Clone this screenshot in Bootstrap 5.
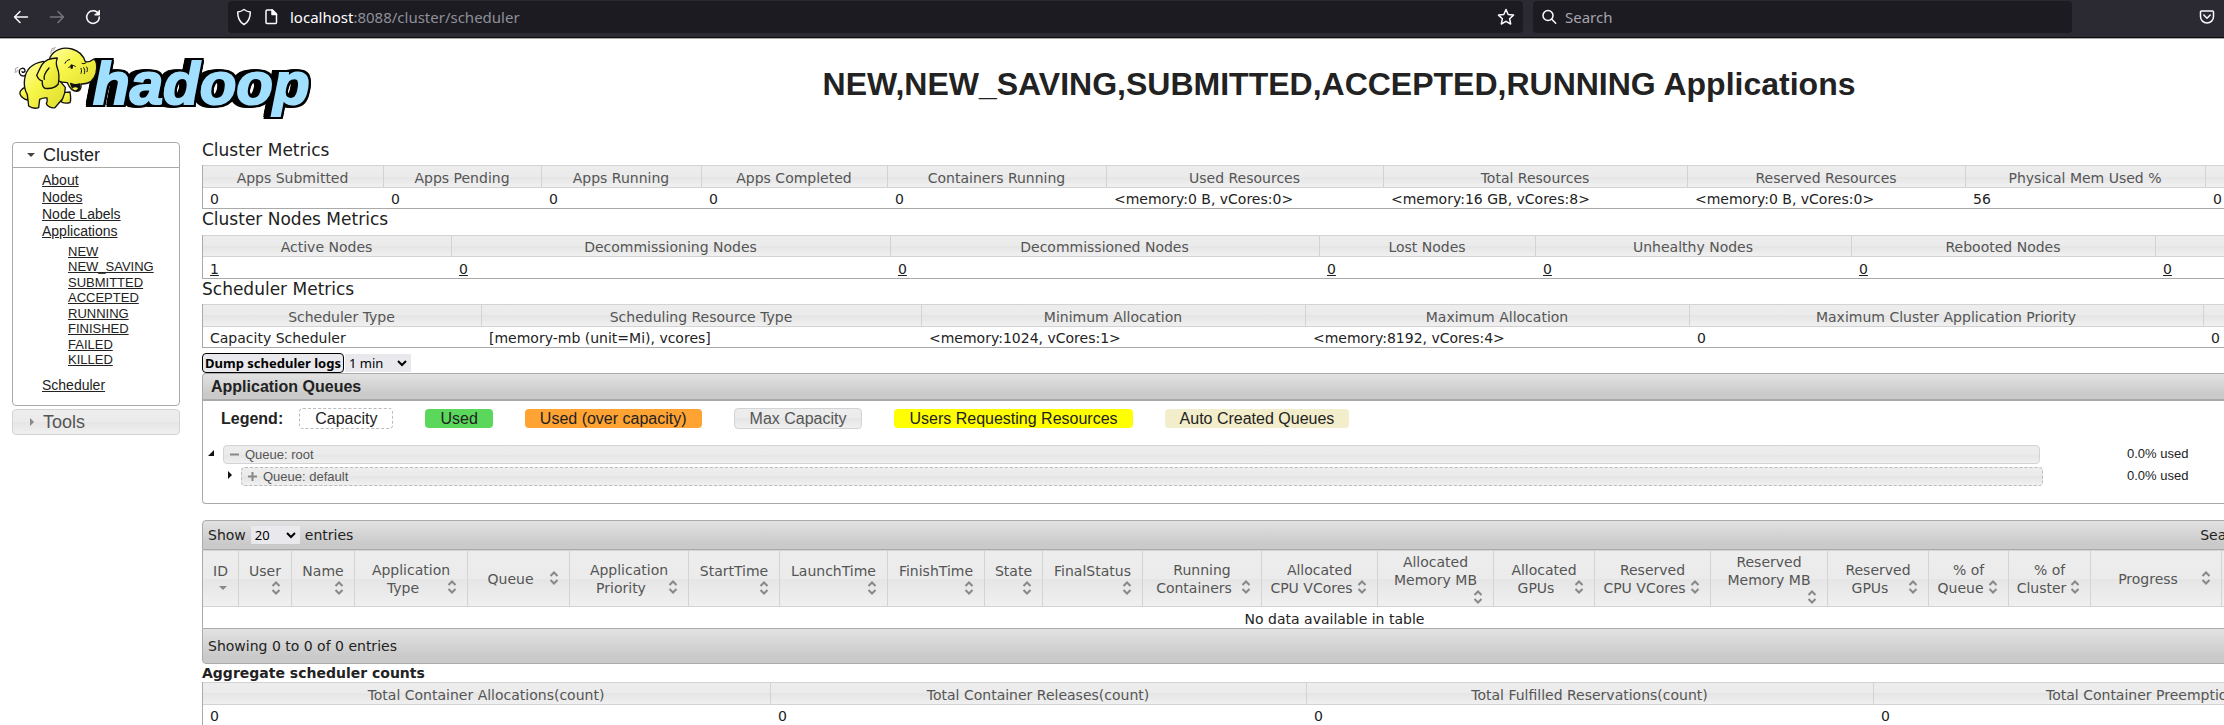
<!DOCTYPE html>
<html lang="en">
<head>
<meta charset="utf-8">
<meta name="viewport" content="width=device-width, initial-scale=1">
<title>NEW,NEW_SAVING,SUBMITTED,ACCEPTED,RUNNING Applications</title>
<link href="https://cdn.jsdelivr.net/npm/bootstrap@5.3.0/dist/css/bootstrap.min.css" rel="stylesheet">
<style>
:root{--sans:"Liberation Sans",Arial,sans-serif;--wide:"DejaVu Sans",sans-serif;--chrome:"Noto Sans",sans-serif;--glass:linear-gradient(#ededed 0,#ebebeb 50%,#e5e5e5 50%,#f0f0f0 100%)}
body{font:14px/18px var(--wide);color:#222;overflow-x:hidden;background:#fff}
a{color:#222;text-decoration:underline}
/* browser toolbar */
.chrome-bar{height:39px;background:#2b2a33;border-bottom:1px solid #aaa;box-shadow:inset 0 -1px #0c0c0d;font:15px/20px var(--chrome);padding:1px 0 5px}
.nav-btns{width:228px;padding-left:12px;gap:18px}
.nav-btns button{width:18px;height:18px;padding:0;border:0;background:none;line-height:0}
.field{background:#1c1b22;border-radius:4px;color:#8f8f98}
.field-url{flex:1295 1 0;gap:12px}
.field-search{flex:539 1 0;margin-left:10px}
.field-search input{background:none;border:0;outline:0;padding:0;color:#fbfbfe;min-width:0}
.field-search input::placeholder{color:#a5a4ac;opacity:1}
.bar-end{width:152px;padding-right:9px}
/* page */
.page{width:calc(100% + 252px);overflow:hidden}
.masthead{display:grid;grid-template-columns:202px 1fr;height:100px}
.masthead h1{font:bold 32px/40px var(--sans);margin:25px 0 0}
.masthead svg{overflow:visible}
.wordmark{font:italic bold 60px var(--sans);fill:#a0dfff;stroke:#a0dfff;stroke-width:2px;filter:drop-shadow(2px 0 0 #000) drop-shadow(-3px 0 0 #000) drop-shadow(-4px 0 0 #000) drop-shadow(0 2px 0 #000) drop-shadow(0 -2px 0 #000)}
.side{width:168px;margin:3px 22px 0 12px;font:14px/17px var(--sans)}
.side h3{font:18px/24px var(--sans);margin:0;padding-left:14px;gap:8px}
.side h3 svg{flex:none}
.side-box{border:1px solid #aaa;border-radius:4px}
.side-box h3{border-bottom:1px solid #aaa}
.side-box ul{list-style:none;margin:0;padding:4px 0 11px 29px}
.side-box ul ul{padding:4px 0 9px 26px;font-size:13px;line-height:1.19}
.side-tools{border:1px solid #d3d3d3;border-radius:4px;background:var(--glass);color:#555;margin-top:3px!important}
main{min-width:0;margin-right:8px}
h2{font:17px/22px var(--wide);margin:0;padding-bottom:4px}
table + h2{line-height:20px;padding-bottom:6px}
.nodes + h2{padding-bottom:5px}
.grid-table{width:100%;table-layout:fixed;border-collapse:separate;border-spacing:0;border:solid #aaa;border-width:0 1px 1px}
.grid-table th{font-weight:400;text-align:center;color:#555;background:var(--glass);border:solid #d3d3d3;border-width:1px 1px 1px 0;padding:3px 8px 0 7px;white-space:nowrap}
.grid-table td{padding:2px 8px 0 7px}
.nodes th{padding-top:2px}
.nodes td{padding-top:3px}
.grid-table th:last-child{border-right:0}
.cluster col:nth-child(1){width:181px}.cluster col:nth-child(2){width:158px}.cluster col:nth-child(3){width:160px}.cluster col:nth-child(4){width:186px}.cluster col:nth-child(5){width:219px}.cluster col:nth-child(6){width:277px}.cluster col:nth-child(7){width:304px}.cluster col:nth-child(8){width:278px}.cluster col:nth-child(9){width:240px}.cluster col:nth-child(10){width:261px}
.nodes col:nth-child(1){width:249px}.nodes col:nth-child(2){width:439px}.nodes col:nth-child(3){width:429px}.nodes col:nth-child(4){width:216px}.nodes col:nth-child(5){width:316px}.nodes col:nth-child(6){width:304px}.nodes col:nth-child(7){width:311px}
.sched col:nth-child(1){width:279px}.sched col:nth-child(2){width:440px}.sched col:nth-child(3){width:384px}.sched col:nth-child(4){width:384px}.sched col:nth-child(5){width:514px}.sched col:nth-child(6){width:263px}
.agg col:nth-child(1){width:568px}.agg col:nth-child(2){width:536px}.agg col:nth-child(3){width:567px}.agg col:nth-child(4){width:593px}
.dump-row{padding-top:5px}
.dump{font:bold 13px/16px var(--chrome);height:20px;padding:0 2px;border:1px solid #000;border-radius:4px;background:#e9e9ed;width:142px;white-space:nowrap;color:#000}
.pick{appearance:none;border:0;border-radius:0;height:18px;padding:0 4px;color:#000;font:13px/18px var(--chrome);background:#e9e9ed url("data:image/svg+xml,%3Csvg xmlns='http://www.w3.org/2000/svg' width='10' height='10'%3E%3Cpath d='M1 3l4 4 4-4' fill='none' stroke='%23000' stroke-width='2'/%3E%3C/svg%3E") no-repeat right 4px center}
.pick-min{width:66px;margin-left:1px}.pick-len{width:49px}
.dark-bar{background:linear-gradient(#e2e2e2,#cacaca 80%);border:1px solid #aaa}
.queue-title{font:bold 16px/25px var(--sans);padding-left:8px;border-bottom-width:2px;border-radius:4px 4px 0 0}
.queue-box{border:1px solid #aaa;border-top:0;border-radius:0 0 4px 4px;height:103px;padding:7px 0 0;font:16px/19px var(--sans)}
.legend-row{padding-left:18px;gap:32px}
.legend-row strong{margin-right:-16px}
.key{padding:0 15px;border-radius:4px;line-height:19px}
.key-cap{border:1px dashed #bbb}
.key-max{border:1px solid #d3d3d3;background:var(--glass);color:#555}
.key-used{background:#5bd75b}.key-over{background:#ffa333}.key-req{background:#ff0}.key-auto{background:#f2eecb}
.q-row{height:22px;font-size:13px;line-height:17px}
.q-tree{padding-top:16px}
.q-tri{width:16px;margin-left:4px}
.q-bar{border:1px solid #d3d3d3;border-radius:4px;background:var(--glass);color:#555;gap:6px;height:19px;margin-right:87px;padding-left:6px}
.q-child{padding-left:18px}
.q-child .q-bar{border:1px dashed #bbb;margin-right:84px}
.q-used{width:340px}
.tool-row{height:30px;padding:0 5px;border-radius:4px 4px 0 0;gap:5px;margin-top:16px}
.search-box{width:204px;height:20px;border:1px solid #888}
.foot-row{height:36px;padding-left:5px;border-radius:0 0 4px 4px}
.apps{border-bottom:0}
.apps th{height:57px;padding:1px 7px;vertical-align:middle}
.apps td{text-align:center;height:21px}
.apps col:nth-child(1){width:36px}.apps col:nth-child(2){width:53px}.apps col:nth-child(3){width:63px}.apps col:nth-child(4){width:113px}.apps col:nth-child(5){width:102px}.apps col:nth-child(6){width:119px}.apps col:nth-child(7){width:91px}.apps col:nth-child(8){width:108px}.apps col:nth-child(9){width:97px}.apps col:nth-child(10){width:58px}.apps col:nth-child(11){width:100px}.apps col:nth-child(12){width:119px}.apps col:nth-child(13){width:116px}.apps col:nth-child(14){width:116px}.apps col:nth-child(15){width:101px}.apps col:nth-child(16){width:116px}.apps col:nth-child(17){width:117px}.apps col:nth-child(18){width:101px}.apps col:nth-child(19){width:80px}.apps col:nth-child(20){width:82px}.apps col:nth-child(21){width:131px}.apps col:nth-child(22){width:108px}.apps col:nth-child(23){width:137px}
.sort{float:right;width:16px;height:16px}
</style>
</head>
<body>
<svg class="d-none">
  <symbol id="both" viewBox="0 0 16 16"><path d="M4.500 6L8 2.500 11.500 6M4.500 10L8 13.500l3.500-3.500" fill="none" stroke="#888" stroke-width="2"/></symbol>
  <symbol id="down" viewBox="0 0 16 16"><path d="M4 6h8l-4 4z" fill="#888"/></symbol>
</svg>

<div class="chrome-bar d-flex">
  <div class="nav-btns d-flex align-items-center">
    <button aria-label="Back"><svg width="18" height="18" fill="none" stroke="#fbfbfe" stroke-width="1.500" stroke-linecap="round" stroke-linejoin="round"><path d="M15.500 9h-13M8 3.500L2.500 9l5.500 5.500"/></svg></button>
    <button aria-label="Forward"><svg width="18" height="18" fill="none" stroke="#77767e" stroke-width="1.500" stroke-linecap="round" stroke-linejoin="round"><path d="M2.500 9h13M10 3.500L15.500 9 10 14.500"/></svg></button>
    <button aria-label="Reload"><svg width="18" height="18" fill="none" stroke="#fbfbfe" stroke-width="1.500" stroke-linecap="round"><path d="M14.500 6A6.300 6.300 0 1 0 15.300 9"/><path d="M15.500 2.500v4.500h-4.500z" fill="#fbfbfe" stroke-width="1"/></svg></button>
  </div>
  <div class="field field-url d-flex align-items-center" role="textbox" aria-label="Address">
    <svg width="16" height="18" class="ms-2" fill="none" stroke="#fbfbfe" stroke-width="1.500" stroke-linejoin="round"><path d="M8 1.500C10 3 12 3.800 14.300 4c0 6-1.500 10-6.300 12.500C3.200 14 1.700 10 1.700 4 4 3.800 6 3 8 1.500z"/></svg>
    <svg width="14" height="18" fill="none" stroke="#fbfbfe" stroke-width="1.500" stroke-linejoin="round"><path d="M3 2h5.500l4 4v8.500a1 1 0 0 1-1 1H3a1 1 0 0 1-1-1V3a1 1 0 0 1 1-1z"/><path d="M8 2v4.500h4.500z" fill="#fbfbfe"/></svg>
    <span><span class="text-white">localhost</span>:8088/cluster/scheduler</span>
    <svg width="18" height="18" class="ms-auto me-2" fill="none" stroke="#fbfbfe" stroke-width="1.500" stroke-linejoin="round"><path d="M9 1.500l2.200 5 5.300.6-3.900 3.600 1.100 5.300L9 13.300 4.300 16l1.100-5.300L1.500 7.100l5.300-.6z"/></svg>
  </div>
  <label class="field field-search d-flex align-items-center">
    <svg width="16" height="18" class="ms-2 me-2" fill="none" stroke="#fbfbfe" stroke-width="1.500" stroke-linecap="round"><circle cx="7" cy="7.500" r="5"/><path d="M10.700 11.200l4 4"/></svg>
    <input type="text" class="flex-grow-1" placeholder="Search" aria-label="Search">
  </label>
  <div class="bar-end d-flex align-items-center justify-content-end">
    <svg width="16" height="18" fill="none" stroke="#fbfbfe" stroke-width="1.500" stroke-linecap="round" stroke-linejoin="round"><path d="M2.500 3h11a1 1 0 0 1 1 1v4.500a6.500 6.500 0 0 1-13 0V4a1 1 0 0 1 1-1z"/><path d="M4.800 7L8 10.200 11.200 7"/></svg>
  </div>
</div>

<div class="page">
  <header class="masthead">
    <svg width="202" height="90" role="img" aria-label="hadoop">
      <defs><linearGradient id="skin" x1="0" y1="0" x2="1" y2="1"><stop offset="0" stop-color="#ffffb0"/><stop offset=".4" stop-color="#f7f64a"/><stop offset="1" stop-color="#dedd2c"/></linearGradient></defs>
      <text class="wordmark" x="93" y="65">hadoop</text>
      <g transform="scale(.33333) translate(0 -117)" stroke="#111" stroke-width="4" stroke-linejoin="round" stroke-linecap="round" fill="url(#skin)">
        <path d="M76 226C64 232 56 222 58 212c2-8 14-10 17-2 1 6-5 9-9 5" fill="none"/>
        <path d="M190 278l-6 28c8 4 18 4 26 2 4-8 2-20 0-32z"/>
        <path d="M74 262c-10 6-16 12-14 20 4 10 14 16 22 18l8-20z"/>
        <path d="M130 184C96 190 78 208 74 236c-3 18 0 34 8 48l4 34c8 6 20 8 30 5l3-25c8-4 16-5 22-4 2 9 0 12-2 17 4 10 16 14 26 12 8-10 16-20 23-27 6-12 8-22 8-34z"/>
        <path d="M150 172c12-24 40-32 66-25 22 6 34 20 40 38 10 2 18-2 26-8 8 6 10 22 6 42-6 24-22 34-45 33 2 14-4 22-13 22-14 0-22-12-28-26-20 0-46-10-58-26z"/>
        <path d="M212 250c8 4 18 5 27 2 2 11-1 19-8 20-10 0-16-10-19-22z" fill="#111"/>
        <path d="M217 265c5-4 12-4 17-1-3 8-10 9-17 1z" fill="#f7f64a" stroke="none"/>
        <path d="M172 174c-20 0-38 8-46 20-7 12-11 22-16 32 4 10 8 16 17 17-1 10 1 18 8 22 16 2 32-3 40-13 3-18 2-36-3-48-4-10-4-20 0-30z"/>
        <path d="M133 238c-3-10 2-20 14-34" fill="none"/>
        <path d="M195 190c3-7 8-11 14-11M206 203c6-8 14-8 20-4" fill="none" stroke-width="3"/>
        <ellipse cx="215" cy="200" rx="4" ry="7" fill="#111" stroke="none"/>
        <path d="M246 190c4 2 8 2 12-2M243 205c2 6 2 10 0 15M251 203c4 6 4 12 2 18M260 201c3 5 3 9 1 14" fill="none" stroke-width="3"/>
        <path d="M152 160l4-14 10-3M158 152l6-5M45 218l2-13 7-3M50 216l2-6" fill="none" stroke="#777" stroke-width="2"/>
      </g>
    </svg>
    <h1 class="text-center">NEW,NEW_SAVING,SUBMITTED,ACCEPTED,RUNNING Applications</h1>
  </header>

  <div class="d-flex align-items-start">
    <nav class="side flex-shrink-0">
      <div class="side-box">
        <h3 class="d-flex align-items-center"><svg width="8" height="6"><path d="M0 1h8L4 5z" fill="#444"/></svg>Cluster</h3>
        <ul>
          <li><a href="#">About</a></li>
          <li><a href="#">Nodes</a></li>
          <li><a href="#">Node Labels</a></li>
          <li><a href="#">Applications</a>
            <ul>
              <li><a href="#">NEW</a></li>
              <li><a href="#">NEW_SAVING</a></li>
              <li><a href="#">SUBMITTED</a></li>
              <li><a href="#">ACCEPTED</a></li>
              <li><a href="#">RUNNING</a></li>
              <li><a href="#">FINISHED</a></li>
              <li><a href="#">FAILED</a></li>
              <li><a href="#">KILLED</a></li>
            </ul>
          </li>
          <li><a href="#">Scheduler</a></li>
        </ul>
      </div>
      <h3 class="side-tools d-flex align-items-center"><svg width="8" height="8"><path d="M3 0v8l4-4z" fill="#888"/></svg>Tools</h3>
    </nav>

    <main class="flex-grow-1">
      <h2>Cluster Metrics</h2>
      <table class="grid-table cluster">
        <colgroup><col><col><col><col><col><col><col><col><col><col></colgroup>
        <thead><tr><th>Apps Submitted</th><th>Apps Pending</th><th>Apps Running</th><th>Apps Completed</th><th>Containers Running</th><th>Used Resources</th><th>Total Resources</th><th>Reserved Resources</th><th>Physical Mem Used %</th><th>Physical VCores Used %</th></tr></thead>
        <tbody><tr><td>0</td><td>0</td><td>0</td><td>0</td><td>0</td><td>&lt;memory:0 B, vCores:0&gt;</td><td>&lt;memory:16 GB, vCores:8&gt;</td><td>&lt;memory:0 B, vCores:0&gt;</td><td>56</td><td>0</td></tr></tbody>
      </table>
      <h2>Cluster Nodes Metrics</h2>
      <table class="grid-table nodes">
        <colgroup><col><col><col><col><col><col><col></colgroup>
        <thead><tr><th>Active Nodes</th><th>Decommissioning Nodes</th><th>Decommissioned Nodes</th><th>Lost Nodes</th><th>Unhealthy Nodes</th><th>Rebooted Nodes</th><th>Shutdown Nodes</th></tr></thead>
        <tbody><tr><td><a href="#">1</a></td><td><a href="#">0</a></td><td><a href="#">0</a></td><td><a href="#">0</a></td><td><a href="#">0</a></td><td><a href="#">0</a></td><td><a href="#">0</a></td></tr></tbody>
      </table>
      <h2>Scheduler Metrics</h2>
      <table class="grid-table sched">
        <colgroup><col><col><col><col><col><col></colgroup>
        <thead><tr><th>Scheduler Type</th><th>Scheduling Resource Type</th><th>Minimum Allocation</th><th>Maximum Allocation</th><th>Maximum Cluster Application Priority</th><th>Scheduler Busy %</th></tr></thead>
        <tbody><tr><td>Capacity Scheduler</td><td>[memory-mb (unit=Mi), vcores]</td><td>&lt;memory:1024, vCores:1&gt;</td><td>&lt;memory:8192, vCores:4&gt;</td><td>0</td><td>0</td></tr></tbody>
      </table>

      <div class="dump-row d-flex align-items-center">
        <button class="dump" type="button">Dump scheduler logs</button>
        <select class="pick pick-min" aria-label="Log period"><option>1 min</option><option>5 min</option><option>10 min</option></select>
      </div>
      <div class="dark-bar queue-title">Application Queues</div>
      <div class="queue-box">
        <div class="legend-row d-flex align-items-center">
          <strong>Legend:</strong>
          <span class="key key-cap">Capacity</span>
          <span class="key key-used">Used</span>
          <span class="key key-over">Used (over capacity)</span>
          <span class="key key-max">Max Capacity</span>
          <span class="key key-req">Users Requesting Resources</span>
          <span class="key key-auto">Auto Created Queues</span>
        </div>
        <div class="q-tree">
          <div class="q-row d-flex align-items-start">
            <svg class="q-tri" height="16"><path d="M7 5v6H1z" fill="#111"/></svg>
            <div class="q-bar d-flex align-items-center flex-grow-1"><svg width="9" height="9"><path d="M0 4.500h9" stroke="#888" stroke-width="2"/></svg>Queue: root</div>
            <span class="q-used">0.0% used</span>
          </div>
          <div class="q-row q-child d-flex align-items-start">
            <svg class="q-tri" height="16"><path d="M3 4v8l4-4z" fill="#111"/></svg>
            <div class="q-bar d-flex align-items-center flex-grow-1"><svg width="9" height="9"><path d="M0 4.500h9M4.500 0v9" stroke="#888" stroke-width="2"/></svg>Queue: default</div>
            <span class="q-used">0.0% used</span>
          </div>
        </div>
      </div>

      <div class="dark-bar tool-row d-flex align-items-center">
        <label for="len">Show</label>
        <select id="len" class="pick pick-len"><option>20</option><option>50</option><option>100</option></select>
        <span>entries</span>
        <label for="find" class="ms-auto">Search:</label>
        <input id="find" class="search-box" type="text">
      </div>
      <table class="grid-table apps">
        <colgroup><col><col><col><col><col><col><col><col><col><col><col><col><col><col><col><col><col><col><col><col><col><col><col></colgroup>
        <thead><tr>
          <th>ID<br><svg class="sort"><use href="#down"/></svg></th>
          <th>User<br><svg class="sort"><use href="#both"/></svg></th>
          <th>Name<br><svg class="sort"><use href="#both"/></svg></th>
          <th>Application<br>Type<svg class="sort"><use href="#both"/></svg></th>
          <th>Queue<svg class="sort"><use href="#both"/></svg></th>
          <th>Application<br>Priority<svg class="sort"><use href="#both"/></svg></th>
          <th>StartTime<br><svg class="sort"><use href="#both"/></svg></th>
          <th>LaunchTime<br><svg class="sort"><use href="#both"/></svg></th>
          <th>FinishTime<br><svg class="sort"><use href="#both"/></svg></th>
          <th>State<br><svg class="sort"><use href="#both"/></svg></th>
          <th>FinalStatus<br><svg class="sort"><use href="#both"/></svg></th>
          <th>Running<br>Containers<svg class="sort"><use href="#both"/></svg></th>
          <th>Allocated<br>CPU VCores<svg class="sort"><use href="#both"/></svg></th>
          <th>Allocated<br>Memory MB<br><svg class="sort"><use href="#both"/></svg></th>
          <th>Allocated<br>GPUs<svg class="sort"><use href="#both"/></svg></th>
          <th>Reserved<br>CPU VCores<svg class="sort"><use href="#both"/></svg></th>
          <th>Reserved<br>Memory MB<br><svg class="sort"><use href="#both"/></svg></th>
          <th>Reserved<br>GPUs<svg class="sort"><use href="#both"/></svg></th>
          <th>% of<br>Queue<svg class="sort"><use href="#both"/></svg></th>
          <th>% of<br>Cluster<svg class="sort"><use href="#both"/></svg></th>
          <th>Progress<svg class="sort"><use href="#both"/></svg></th>
          <th>Tracking UI</th>
          <th>Blacklisted<br>Nodes</th>
        </tr></thead>
        <tbody><tr><td colspan="23">No data available in table</td></tr></tbody>
      </table>
      <div class="dark-bar foot-row d-flex align-items-center">Showing 0 to 0 of 0 entries</div>
      <div class="fw-bold">Aggregate scheduler counts</div>
      <table class="grid-table agg">
        <colgroup><col><col><col><col></colgroup>
        <thead><tr><th>Total Container Allocations(count)</th><th>Total Container Releases(count)</th><th>Total Fulfilled Reservations(count)</th><th>Total Container Preemptions(count)</th></tr></thead>
        <tbody><tr><td>0</td><td>0</td><td>0</td><td>0</td></tr></tbody>
      </table>
    </main>
  </div>
</div>
<script src="https://cdn.jsdelivr.net/npm/bootstrap@5.3.0/dist/js/bootstrap.bundle.min.js"></script>
</body>
</html>
